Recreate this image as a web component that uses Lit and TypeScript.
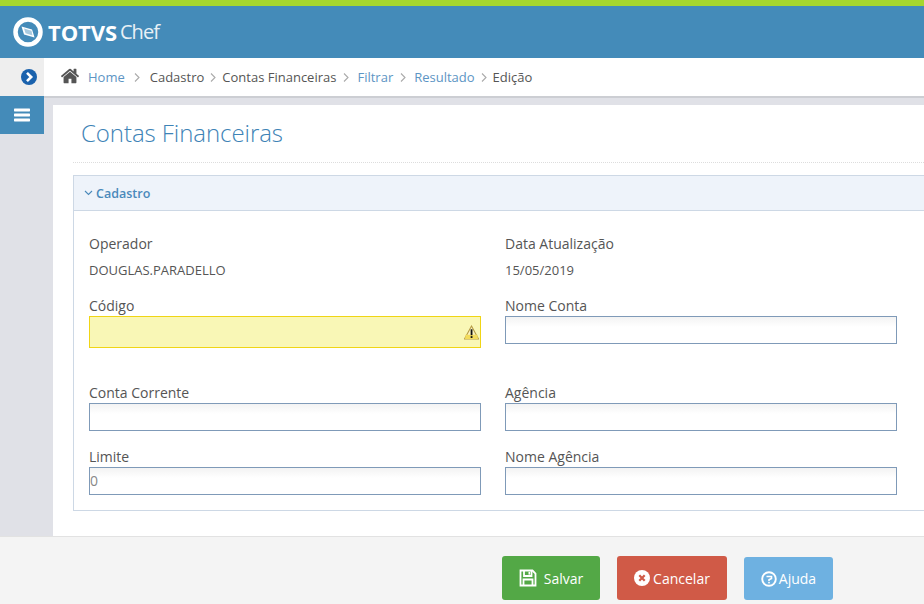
import { LitElement, html, css } from "lit";
import { customElement } from "lit/decorators.js";

const FA = "0 0 1792 1792";
const homeP = "M1472 992v480q0 26-19 45t-45 19h-384v-384H768v384H384q-26 0-45-19t-19-45V992q0-1 .5-3t.5-3l575-474 575 474q1 2 1 6zm223-69l-62 74q-8 9-21 11h-3q-13 0-21-7L896 424 204 1001q-12 8-24 7-13-2-21-11l-62-74q-8-10-7-23.500t11-21.500l719-599q32-26 76-26t76 26l244 204V288q0-14 9-23t23-9h192q14 0 23 9t9 23v408l219 182q10 8 11 21.500t-7 23.500z";

@customElement("app-root")
export class AppRoot extends LitElement {
  static styles = css`
    :host { display: block; width: 924px; height: 604px; overflow: hidden; font-family: "Open Sans", "Noto Sans", sans-serif; color: #555; background: #e0e1e7; }
    .page { height: 604px; display: flex; flex-direction: column; }
    .top { height: 52px; flex: none; border-top: 6px solid #a6d62e; background: #448bb9; display: flex; align-items: center; padding-left: 13px; color: #fff; }
    .logo { width: 30px; height: 30px; margin-right: 5px; }
    .totvs { font-size: 22px; font-weight: 700; letter-spacing: -.1px; line-height: 1; }
    .chef { font-size: 20px; font-weight: 400; margin-left: 3px; line-height: 1; letter-spacing: -.9px; opacity: .88; }
    .mid { flex: 1; display: flex; min-height: 0; }
    .side { width: 44px; flex: none; background: #e0e1e7; }
    .tog { height: 38px; background: #eeeeee; display: flex; align-items: center; justify-content: flex-end; padding-right: 7px; box-sizing: border-box; }
    .menu { height: 38px; background: #448bb9; display: flex; align-items: center; justify-content: center; }
    .main { flex: 1; min-width: 0; display: flex; flex-direction: column; }
    .crumbs { height: 40px; flex: none; box-sizing: border-box; background: #fff; border-bottom: 2px solid #ccced3; display: flex; align-items: center; padding: 0 0 0 16px; font-size: 13px; color: #555; }
    .home { width: 20px; height: 20px; margin: -2px 8px 0 0; }
    .crumbs a { color: #5d95c4; }
    .sep { width: 6px; height: 9px; margin: 1px 6px 0 6px; }
    .sep.a { margin: 1px 10px 0 9px; }
    .sep.b { margin: 1px 6px 0 6px; }
    .sep.c { margin: 1px 8px 0 7px; }
    .sheet { flex: 1; margin: 7px 0 0 9px; background: #fff; padding: 0 0 0 20px; min-height: 0; }
    h1 { margin: 0; padding: 11px 0 0 8px; height: 46px; font-size: 24px; line-height: 34px; font-weight: 300; letter-spacing: -.06px; color: #3e83b6; border-bottom: 1px dotted #ddd; }
    .panel { margin-top: 12px; border: 1px solid #cdd8e5; border-right: 0; height: 336px; box-sizing: border-box; }
    .head { height: 35px; box-sizing: border-box; background: #eef3fa; border-bottom: 1px solid #cdd8e5; display: flex; align-items: center; padding-left: 10px; color: #4a89ba; font-size: 12.500px; font-weight: 600; }
    .head svg { width: 9px; height: 6px; margin-right: 3px; }
    .form { display: grid; grid-template-columns: 392px 392px; column-gap: 24px; padding: 22px 0 0 15px; }
    .f { display: flex; flex-direction: column; }
    .lab { font-size: 14px; line-height: 21px; color: #555; }
    .val { font-size: 13px; line-height: 18px; margin-top: 7px; color: #555; }
    .inp { box-sizing: border-box; height: 28px; border: 1px solid #7f9ab8; background: linear-gradient(#f3f3f3, #fff 10px); font-size: 14px; color: #888; line-height: 26px; }
    .warn { position: relative; height: 32px; background: #f9f7b6; border-color: #f0d515; }
    .warn svg { position: absolute; right: 1px; top: 8px; width: 15px; height: 15px; }
    .r1 { height: 62px; }
    .r2 { height: 87px; }
    .r3 { height: 64px; }
    .foot { height: 68px; flex: none; box-sizing: border-box; background: #f4f4f4; border-top: 1px solid #e2e2e2; display: flex; padding: 19px 0 0 502px; color: #fff; font-size: 14px; }
    .btn { height: 44px; box-sizing: border-box; border-radius: 3px; display: flex; align-items: center; justify-content: center; color: #fff; }
    .save { width: 98px; background: #53a846; gap: 7px; margin-right: 17px; }
    .cancel { width: 110px; background: #d05a47; gap: 3px; margin-right: 17px; }
    .help { width: 89px; height: 43px; margin-top: 1px; background: #6eb1e1; gap: 2px; }
  `;

  private sep(cls = "") {
    return html`<svg class="sep ${cls}" viewBox="0 0 6 9"><path d="M1 .5 5 4.500 1 8.500" fill="none" stroke="#aaa" stroke-width="1.100"/></svg>`;
  }

  render() {
    return html`<div class="page">
      <div class="top">
        <svg class="logo" viewBox="0 0 30 30">
          <circle cx="15" cy="15" r="12.500" fill="#448bb9" stroke="#fff" stroke-width="4.500"/>
          <path d="M8.500 9.500 19 12.500 21.500 20.500 11 17.500Z" fill="#fff"/>
          <path d="M11 11.500 18.500 13.700 19.500 18.500 12.500 16.300Z" fill="#a9cbe0"/>
        </svg>
        <span class="totvs">TOTVS</span><span class="chef">Chef</span>
      </div>
      <div class="mid">
        <div class="side">
          <div class="tog">
            <svg width="16" height="16" viewBox="0 0 16 16"><circle cx="8" cy="8" r="8" fill="#1a62ad"/><path d="M6 3.800 10.200 8 6 12.200" fill="none" stroke="#fff" stroke-width="2.600"/></svg>
          </div>
          <div class="menu">
            <svg width="16" height="14" viewBox="0 0 16 14"><rect width="16" height="2.800" rx=".6" y=".6" fill="#fff"/><rect width="16" height="2.800" rx=".6" y="5.600" fill="#fff"/><rect width="16" height="2.800" rx=".6" y="10.600" fill="#fff"/></svg>
          </div>
        </div>
        <div class="main">
          <div class="crumbs">
            <svg class="home" viewBox="${FA}"><path fill="#555" d="${homeP}"/></svg>
            <a>Home</a>${this.sep("a")}<span>Cadastro</span>${this.sep()}<span>Contas Financeiras</span>${this.sep("c")}<a>Filtrar</a>${this.sep("c")}<a>Resultado</a>${this.sep("b")}<span>Edição</span>
          </div>
          <div class="sheet">
            <h1>Contas Financeiras</h1>
            <div class="panel">
              <div class="head">
                <svg viewBox="0 0 9 6"><path d="M1 1 4.500 4.500 8 1" fill="none" stroke="#4a89ba" stroke-width="1.100"/></svg>
                Cadastro
              </div>
              <div class="form">
                <div class="f r1"><span class="lab">Operador</span><span class="val">DOUGLAS.PARADELLO</span></div>
                <div class="f r1"><span class="lab">Data Atualização</span><span class="val">15/05/2019</span></div>
                <div class="f r2"><span class="lab">Código</span>
                  <div class="inp warn">
                    <svg viewBox="0 0 14 14"><path d="M7 1 13.500 13H.5Z" fill="#fbf3c0" stroke="#b59a45"/><path d="M1.500 9H12.500L13 13H1Z" fill="#f3dc5c"/><rect x="6.200" y="4" width="1.700" height="5.500" fill="#111"/><rect x="6.200" y="10.400" width="1.700" height="1.700" fill="#111"/></svg>
                  </div>
                </div>
                <div class="f r2"><span class="lab">Nome Conta</span><div class="inp"></div></div>
                <div class="f r3"><span class="lab">Conta Corrente</span><div class="inp"></div></div>
                <div class="f r3"><span class="lab">Agência</span><div class="inp"></div></div>
                <div class="f r3"><span class="lab">Limite</span><div class="inp">0</div></div>
                <div class="f r3"><span class="lab">Nome Agência</span><div class="inp"></div></div>
              </div>
            </div>
          </div>
        </div>
      </div>
      <div class="foot">
        <div class="btn save">
          <svg width="18" height="18" viewBox="0 0 18 18" fill="none" stroke="#fff" stroke-width="1.800"><path d="M1.500 1.500H13.500L16.500 4.500V16.500H1.500Z"/><path d="M5 2v5h7.500V2M4.500 16v-5.500h9V16"/><rect x="9.500" y="2.800" width="1.500" height="2.800" fill="#fff" stroke="none"/></svg>
          <span>Salvar</span>
        </div>
        <div class="btn cancel">
          <svg width="16" height="16" viewBox="0 0 16 16"><circle cx="8" cy="8" r="8" fill="#fff"/><path d="M5.300 5.300 10.700 10.700M10.700 5.300 5.300 10.700" stroke="#d05a47" stroke-width="2.200"/></svg>
          <span>Cancelar</span>
        </div>
        <div class="btn help">
          <svg width="16" height="16" viewBox="0 0 16 16" fill="none" stroke="#fff"><circle cx="8" cy="8" r="6.800" stroke-width="1.900"/><path d="M5.500 5.500H10.500V7.500L8 8.800V10" stroke-width="1.600"/><rect x="7.200" y="10.800" width="1.600" height="1.600" fill="#fff" stroke="none"/></svg>
          <span>Ajuda</span>
        </div>
      </div>
    </div>`;
  }
}
